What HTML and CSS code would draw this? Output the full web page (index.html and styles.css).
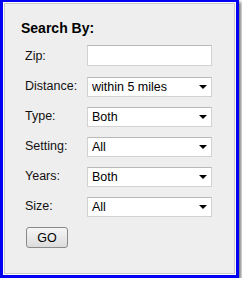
FILE: index.html
```html
<!DOCTYPE html>
<html lang="en">
<head>
  <meta charset="UTF-8">
  <title>Search By</title>
  <link rel="stylesheet" href="styles.css">
</head>
<body>
  <div class="frame">
    <div class="panel">
      <h3 class="title">Search By:</h3>
      <form class="search-form">
        <label class="label">Zip:</label>
        <input class="field zip" type="text">

        <label class="label">Distance:</label>
        <div class="select-wrap">
          <select class="field"><option>within 5 miles</option></select>
        </div>

        <label class="label">Type:</label>
        <div class="select-wrap">
          <select class="field"><option>Both</option></select>
        </div>

        <label class="label">Setting:</label>
        <div class="select-wrap">
          <select class="field"><option>All</option></select>
        </div>

        <label class="label">Years:</label>
        <div class="select-wrap">
          <select class="field"><option>Both</option></select>
        </div>

        <label class="label">Size:</label>
        <div class="select-wrap">
          <select class="field"><option>All</option></select>
        </div>
      </form>
      <button class="go" type="button">GO</button>
    </div>
  </div>
</body>
</html>
```

FILE: styles.css
```css
body, html {
  margin: 0;
  padding: 0;
  background-color: #ffffff;
  font-family: "Liberation Sans", Arial, sans-serif;
}

.frame {
  width: 239px;
  height: 278px;
  box-sizing: border-box;
  border: 3px solid #0000f2;
  border-top-width: 2px;
  padding: 1px;
  background-color: #ffffff;
  box-shadow: 2px 2px 3px rgba(0, 0, 0, 0.55);
}

.panel {
  height: 100%;
  box-sizing: border-box;
  border: 1px solid #c9c9c9;
  background-color: #eeeeee;
  padding: 16px 0 0 16px;
}

.title {
  margin: 0 0 10px 0;
  font-size: 14px;
  line-height: 16px;
  font-weight: bold;
  color: #000000;
}

.search-form {
  display: grid;
  grid-template-columns: 62px 125px;
  grid-auto-rows: 20px;
  row-gap: 10px;
  padding-left: 4px;
  align-items: center;
}

.label {
  font-size: 12.5px;
  color: #111111;
}

.field {
  width: 125px;
  height: 20px;
  box-sizing: border-box;
  margin: 0;
  border: 1px solid #d2d2d2;
  border-top-color: #b9b9b9;
  background-color: #ffffff;
  font-family: "Liberation Sans", Arial, sans-serif;
  font-size: 12.5px;
  color: #000000;
  padding: 0 4px;
  -webkit-appearance: none;
  appearance: none;
  border-radius: 0;
  outline: none;
}

.zip {
  height: 21px;
  margin-bottom: 1px;
}

.select-wrap {
  position: relative;
  height: 20px;
  margin-top: 2px;
}

.select-wrap::after {
  content: "";
  position: absolute;
  right: 5px;
  top: 8px;
  border-left: 4px solid transparent;
  border-right: 4px solid transparent;
  border-top: 4px solid #000000;
  pointer-events: none;
}

.go {
  margin: 11px 0 0 5px;
  width: 42px;
  height: 21px;
  border: 1px solid #8a8a8a;
  border-radius: 3px;
  background: linear-gradient(#f6f6f6, #dcdcdc);
  font-family: "Liberation Sans", Arial, sans-serif;
  font-size: 12.5px;
  color: #000000;
  padding: 0;
}
```
